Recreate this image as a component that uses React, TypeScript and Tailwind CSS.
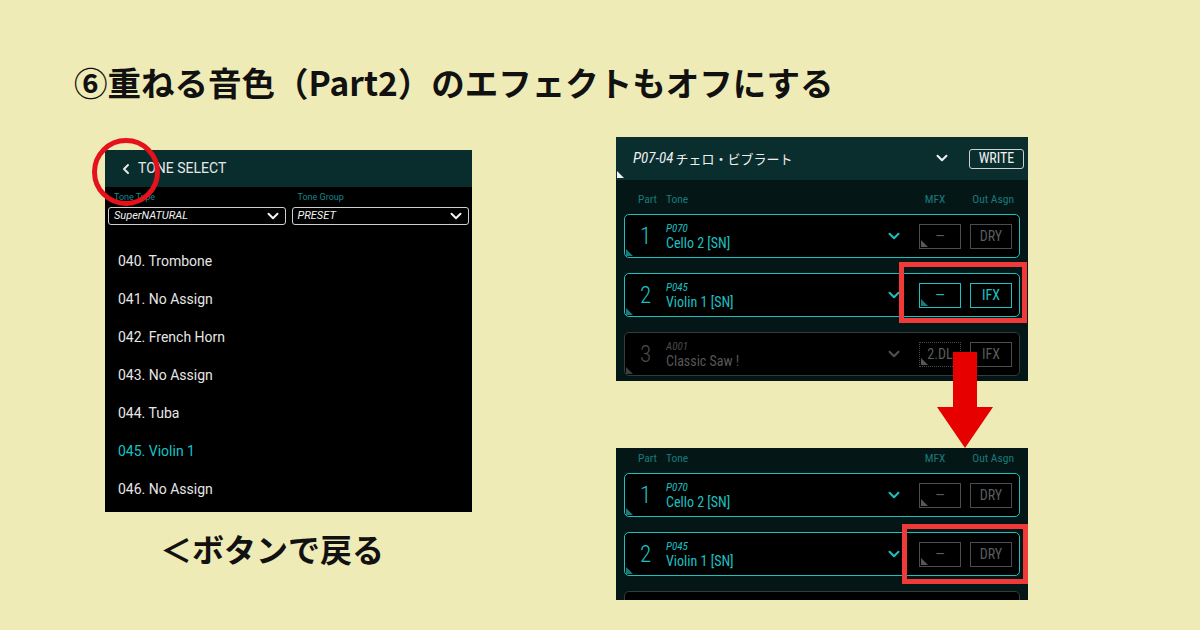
import clsx from "clsx";

type Tone = "cyan" | "gray";
type Cell = { label: string; tone: Tone; dotted?: boolean; corner?: boolean };
type Part = { num: string; bank: string; name: string; dim?: boolean; mfx: Cell; out: Cell };

const toneItems = [
  "040. Trombone",
  "041. No Assign",
  "042. French Horn",
  "043. No Assign",
  "044. Tuba",
  "045. Violin 1",
  "046. No Assign",
];

const partsBefore: Part[] = [
  { num: "1", bank: "P070", name: "Cello 2 [SN]", mfx: { label: "—", tone: "gray", corner: true }, out: { label: "DRY", tone: "gray" } },
  { num: "2", bank: "P045", name: "Violin 1 [SN]", mfx: { label: "—", tone: "cyan", corner: true }, out: { label: "IFX", tone: "cyan" } },
  { num: "3", bank: "A001", name: "Classic Saw !", dim: true, mfx: { label: "2.DL", tone: "gray", dotted: true, corner: true }, out: { label: "IFX", tone: "gray" } },
];

// the third row is scrolled mostly out of view, only its frame shows
const partsAfter: Part[] = [
  { num: "1", bank: "P070", name: "Cello 2 [SN]", mfx: { label: "—", tone: "gray", corner: true }, out: { label: "DRY", tone: "gray" } },
  { num: "2", bank: "P045", name: "Violin 1 [SN]", mfx: { label: "—", tone: "gray", corner: true }, out: { label: "DRY", tone: "gray" } },
  { num: "", bank: "", name: "", dim: true, mfx: { label: "", tone: "gray" }, out: { label: "", tone: "gray" } },
];

function Chevron({ color, size = 12 }: { color: string; size?: number }) {
  return (
    <svg width={size} height={size * 0.7} viewBox="0 0 12 8" fill="none">
      <polyline points="1.5,1.5 6,6 10.5,1.5" stroke={color} strokeWidth="2" strokeLinecap="round" strokeLinejoin="round" />
    </svg>
  );
}

function Corner({ color, className }: { color: string; className?: string }) {
  return (
    <svg width="7" height="7" viewBox="0 0 7 7" className={className}>
      <polygon points="0,0 7,7 0,7" fill={color} />
    </svg>
  );
}

function ValueBox({ cell }: { cell: Cell }) {
  return (
    <div
      className={clsx(
        "relative flex h-[25px] w-[42px] items-center justify-center text-[14px]",
        cell.dotted ? "border border-dotted" : "border",
        cell.tone === "cyan" ? "border-[#1cc0c1] text-[#1cc0c1]" : "border-[#4a4d4d] text-[#5a5d5d]",
      )}
    >
      {cell.label}
      {cell.corner && (
        <Corner color={cell.tone === "cyan" ? "#1b7b7b" : "#555858"} className="absolute bottom-[1px] left-[1px]" />
      )}
    </div>
  );
}

function PartRow({ part }: { part: Part }) {
  const dim = part.dim;
  return (
    <div
      className={clsx(
        "relative flex h-[44px] shrink-0 items-center rounded-[5px] border bg-black pr-[7px]",
        dim ? "border-[#353a3a]" : "border-[#1cc0c1]",
      )}
    >
      <span className={clsx("w-[41px] pl-[15px] text-[23px] font-light leading-none", dim ? "text-[#4a4d4d]" : "text-[#1cc0c1]")}>
        {part.num}
      </span>
      <div className="flex flex-col leading-none">
        <span className={clsx("text-[11px] italic", dim ? "text-[#4a4d4d]" : "text-[#1cc0c1]")}>{part.bank}</span>
        <span className={clsx("mt-[2px] text-[14px]", dim ? "text-[#555858]" : "text-[#1cc0c1]")}>{part.name}</span>
      </div>
      <div className="ml-auto mr-[19px] flex items-center">
        <Chevron color={dim ? "#505353" : "#1cc0c1"} />
      </div>
      <ValueBox cell={part.mfx} />
      <div className="w-[9px]" />
      <ValueBox cell={part.out} />
      <Corner color={dim ? "#3c3f3f" : "#1b7b7b"} className="absolute bottom-[1px] left-[1px]" />
    </div>
  );
}

function ColumnLabels() {
  return (
    <div className="flex h-[22px] items-center pl-[22px] pr-[14px] text-[11.5px] text-[#197a7b]">
      <span className="w-[28px]">Part</span>
      <span>Tone</span>
      <span className="ml-auto">MFX</span>
      <span className="ml-[27px]">Out Asgn</span>
    </div>
  );
}

function PartPanel({ parts, header, height }: { parts: Part[]; header?: boolean; height: string }) {
  return (
    <div className={clsx("flex w-[412px] flex-col overflow-hidden bg-[#041716] font-['Roboto',sans-serif] font-stretch-[75%]", height)}>
      {header && (
        <div className="relative flex h-[43px] shrink-0 items-center bg-[#0a2e2e] pl-[17px] pr-[4px]">
          <span className="text-[15px] italic text-[#eeeeee]">P07-04</span>
          <span className="ml-[2px] font-['Noto_Sans_CJK_JP',sans-serif] text-[13px] text-[#eeeeee]">チェロ・ビブラート</span>
          <div className="ml-auto mr-[21px]">
            <Chevron color="#f2f2f2" />
          </div>
          <div className="flex h-[20px] w-[55px] items-center justify-center rounded-[3px] border-[1.5px] border-[#cfcfcf] text-[14px] text-[#f2f2f2]">
            WRITE
          </div>
          <Corner color="#f2f2f2" className="absolute bottom-[2px] left-[1px]" />
        </div>
      )}
      <div className={clsx("flex flex-col", header ? "pt-[9px]" : "pt-0")}>
        <ColumnLabels />
        <div className="mt-[3px] flex flex-col gap-[15px] px-[8px]">
          {parts.map((p, i) => (
            <PartRow key={i} part={p} />
          ))}
        </div>
      </div>
    </div>
  );
}

function ToneSelect() {
  return (
    <div className="flex h-[362px] w-[367px] flex-col overflow-hidden bg-black font-['Roboto',sans-serif]">
      <div className="flex h-[37px] shrink-0 items-center bg-[#092d2d] pl-[16px]">
        <svg width="10" height="12" viewBox="0 0 10 12" fill="none">
          <polyline points="7,2 3,6 7,10" stroke="#e8e8e8" strokeWidth="2" strokeLinecap="round" strokeLinejoin="round" />
        </svg>
        <span className="ml-[7px] text-[14px] text-[#e8e8e8]">TONE SELECT</span>
      </div>
      <div className="flex gap-[6px] px-[3px] pt-[2px]">
        <div className="flex-1">
          <div className="pl-[6px] text-[9px] leading-[16px] text-[#138a8b]">Tone Type</div>
          <div className="mt-[2px] flex h-[18px] items-center justify-between rounded-[3px] border border-[#cfcfcf] pl-[5px] pr-[6px]">
            <span className="text-[11px] italic text-[#f2f2f2]">SuperNATURAL</span>
            <Chevron color="#f2f2f2" />
          </div>
        </div>
        <div className="flex-1">
          <div className="pl-[6px] text-[9px] leading-[16px] text-[#138a8b]">Tone Group</div>
          <div className="mt-[2px] flex h-[18px] items-center justify-between rounded-[3px] border border-[#cfcfcf] pl-[5px] pr-[6px]">
            <span className="text-[11px] italic text-[#f2f2f2]">PRESET</span>
            <Chevron color="#f2f2f2" />
          </div>
        </div>
      </div>
      <ul className="mt-[17px] flex flex-col pl-[13px]">
        {toneItems.map((item) => (
          <li
            key={item}
            className={clsx("flex h-[38px] items-center text-[14px]", item.startsWith("045") ? "text-[#15c4c6]" : "text-[#e6e6e6]")}
          >
            {item}
          </li>
        ))}
      </ul>
    </div>
  );
}

export default function App() {
  return (
    <div className="relative h-[630px] w-[1200px] overflow-hidden bg-[#efebb6] font-['Noto_Sans_CJK_JP',sans-serif] text-[#111]">
      <h1 className="pl-[74px] pt-[62px] text-[33.5px] font-bold leading-[40px] text-[#111]">
        ⑥重ねる音色（Part2）のエフェクトもオフにする
      </h1>

      <div className="mt-[35px] flex items-start">
        <div className="ml-[105px] mt-[13px] flex flex-col">
          <ToneSelect />
          <p className="ml-[55px] mt-[18px] text-[32px] font-bold leading-[36px] text-[#111]">＜ボタンで戻る</p>
        </div>

        <div className="ml-[144px] flex flex-col gap-[67px]">
          <PartPanel parts={partsBefore} header height="h-[244px]" />
          <PartPanel parts={partsAfter} height="h-[152px]" />
        </div>
      </div>

      {/* call-outs drawn over the screens */}
      <div className="pointer-events-none absolute left-[92px] top-[138px] h-[68px] w-[68px] rounded-full border-[5px] border-[#e5121b]" />
      <div className="pointer-events-none absolute left-[899px] top-[262px] h-[61px] w-[128px] border-[5px] border-[#f03a3a]" />
      <div className="pointer-events-none absolute left-[902px] top-[524px] h-[60px] w-[126px] border-[5px] border-[#f03a3a]" />
      <svg className="pointer-events-none absolute left-[937px] top-[352px]" width="56" height="96" viewBox="0 0 56 96">
        <polygon points="16,0 40,0 40,55 56,55 28,96 0,55 16,55" fill="#e60000" />
      </svg>
    </div>
  );
}
